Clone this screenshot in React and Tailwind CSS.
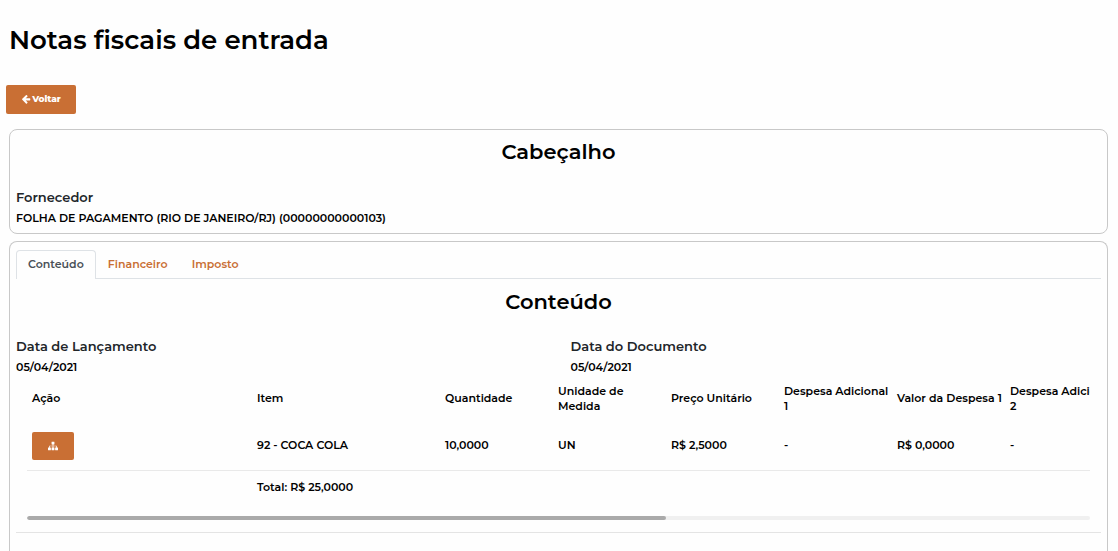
import { useRef, useState } from "react";

const columns = [
  "Quantidade",
  "Unidade de\nMedida",
  "Preço Unitário",
  "Despesa Adicional\n1",
  "Valor da Despesa 1",
  "Despesa Adicional\n2",
];

const items = [
  {
    name: "92 - COCA COLA",
    values: ["10,0000", "UN", "R$ 2,5000", "-", "R$ 0,0000", "-"],
  },
];

const tabs = ["Conteúdo", "Financeiro", "Imposto"];

function ArrowLeftIcon() {
  return (
    <svg viewBox="0 0 1792 1792" className="size-[10px]" fill="currentColor" aria-hidden="true">
      <path d="M1664 896v128q0 53-32.5 90.5t-84.5 37.5h-704l293 294q38 36 38 90t-38 90l-75 76q-37 37-90 37-52 0-91-37l-651-652q-37-37-37-90 0-52 37-91l651-650q38-38 91-38 52 0 90 38l75 74q38 38 38 91t-38 91l-293 293h704q52 0 84.5 37.5t32.5 90.5z" />
    </svg>
  );
}

function SitemapIcon() {
  return (
    <svg viewBox="0 0 1792 1792" className="size-[10px]" fill="currentColor" aria-hidden="true">
      <path d="M1792 1248v320q0 40-28 68t-68 28h-320q-40 0-68-28t-28-68v-320q0-40 28-68t68-28h96v-192h-512v192h96q40 0 68 28t28 68v320q0 40-28 68t-68 28h-320q-40 0-68-28t-28-68v-320q0-40 28-68t68-28h96v-192h-512v192h96q40 0 68 28t28 68v320q0 40-28 68t-68 28h-320q-40 0-68-28t-28-68v-320q0-40 28-68t68-28h96v-192q0-52 38-90t90-38h512v-192h-96q-40 0-68-28t-28-68v-320q0-40 28-68t68-28h320q40 0 68 28t28 68v320q0 40-28 68t-68 28h-96v192h512q52 0 90 38t38 90v192h96q40 0 68 28t28 68z" />
    </svg>
  );
}

function Field({ label, value }) {
  return (
    <dl>
      <dt className="text-[13px] leading-5 text-[#212529]">{label}</dt>
      <dd className="pt-[3px] text-[11px] leading-4 text-black">{value}</dd>
    </dl>
  );
}

function ItemsTable() {
  const viewport = useRef(null);
  const [progress, setProgress] = useState(0);

  const onScroll = () => {
    const el = viewport.current;
    setProgress((el.scrollLeft / el.scrollWidth) * 100);
  };

  return (
    <div className="mx-[11px]">
      <div
        ref={viewport}
        onScroll={onScroll}
        className="overflow-x-auto [scrollbar-width:none]"
      >
        <table className="w-[1768px] table-fixed text-left text-[11px] leading-[15px] text-black">
          <colgroup>
            <col className="w-[225px]" />
            <col className="w-[188px]" />
            {columns.map((c) => (
              <col key={c} className="w-[113px]" />
            ))}
            <col />
          </colgroup>
          <thead>
            <tr className="h-[47px]">
              <th className="pl-[5px] font-semibold">Ação</th>
              <th className="pl-[5px] font-semibold">Item</th>
              {columns.map((c) => (
                <th key={c} className="pl-[5px] font-semibold whitespace-pre">
                  {c}
                </th>
              ))}
              <td />
            </tr>
          </thead>
          <tbody>
            {items.map((item) => (
              <tr key={item.name} className="h-12 border-b border-[#e9e9e9]">
                <td className="pl-[5px]">
                  <button
                    type="button"
                    aria-label="Detalhes"
                    className="flex h-7 w-[42px] items-center justify-center rounded-xs bg-[#c96f34] text-white"
                  >
                    <SitemapIcon />
                  </button>
                </td>
                <td className="pl-[5px]">{item.name}</td>
                {item.values.map((v, i) => (
                  <td key={columns[i]} className="pl-[5px]">
                    {v}
                  </td>
                ))}
                <td />
              </tr>
            ))}
          </tbody>
          <tfoot>
            <tr className="h-[34px]">
              <td />
              <td className="pl-[5px]">Total: R$ 25,0000</td>
              <td colSpan={7} />
            </tr>
          </tfoot>
        </table>
      </div>
      <div className="mt-3 h-1 overflow-hidden rounded-sm bg-[#f0f0f0]">
        <div
          className="h-1 w-[60.1%] rounded-sm bg-[#aaaaaa]"
          style={{ marginLeft: `${progress}%` }}
        />
      </div>
    </div>
  );
}

export default function App() {
  const [active, setActive] = useState(tabs[0]);

  return (
    <main className="min-h-screen bg-[#fefefe] pr-[10px] pl-[9px] font-['Montserrat','Inter',sans-serif] font-semibold">
      <h1 className="pt-5 text-[26px] leading-10 text-black">Notas fiscais de entrada</h1>

      <button
        type="button"
        className="mt-[25px] -ml-[3px] flex h-[29px] w-[70px] items-center justify-center gap-px rounded-xs bg-[#c96f34] pb-px text-[9px] font-extrabold text-white"
      >
        <ArrowLeftIcon />
        Voltar
      </button>

      <section className="mt-[15px] rounded-lg border border-[#c8c8c8] px-[6px] pt-2 pb-[7px]">
        <h2 className="text-center text-[21px] leading-7 text-black">Cabeçalho</h2>
        <div className="pt-[21px]">
          <Field
            label="Fornecedor"
            value="FOLHA DE PAGAMENTO (RIO DE JANEIRO/RJ) (00000000000103)"
          />
        </div>
      </section>

      <section className="mt-[7px] rounded-t-lg border border-b-0 border-[#c8c8c8] px-[6px] pt-2 pb-10">
        <div role="tablist" className="flex border-b border-[#dee2e6] text-[11px] leading-4">
          {tabs.map((t) => (
            <button
              key={t}
              type="button"
              role="tab"
              aria-selected={t === active}
              onClick={() => setActive(t)}
              className={
                t === active
                  ? "-mb-px h-[29px] rounded-t-sm border border-b-0 border-[#dee2e6] bg-[#fefefe] px-[11px] pb-[3px] text-[#495057]"
                  : "-mb-px h-[29px] border border-b-0 border-transparent px-[11px] pb-[3px] text-[#c96f34]"
              }
            >
              {t}
            </button>
          ))}
        </div>

        <h2 className="pt-[9px] text-center text-[21px] leading-7 text-black">Conteúdo</h2>
        <div className="grid grid-cols-2 gap-6 pt-5">
          <Field label="Data de Lançamento" value="05/04/2021" />
          <Field label="Data do Documento" value="05/04/2021" />
        </div>
        <ItemsTable />
        <hr className="mt-3 border-[#e4e4e4]" />
      </section>
    </main>
  );
}
